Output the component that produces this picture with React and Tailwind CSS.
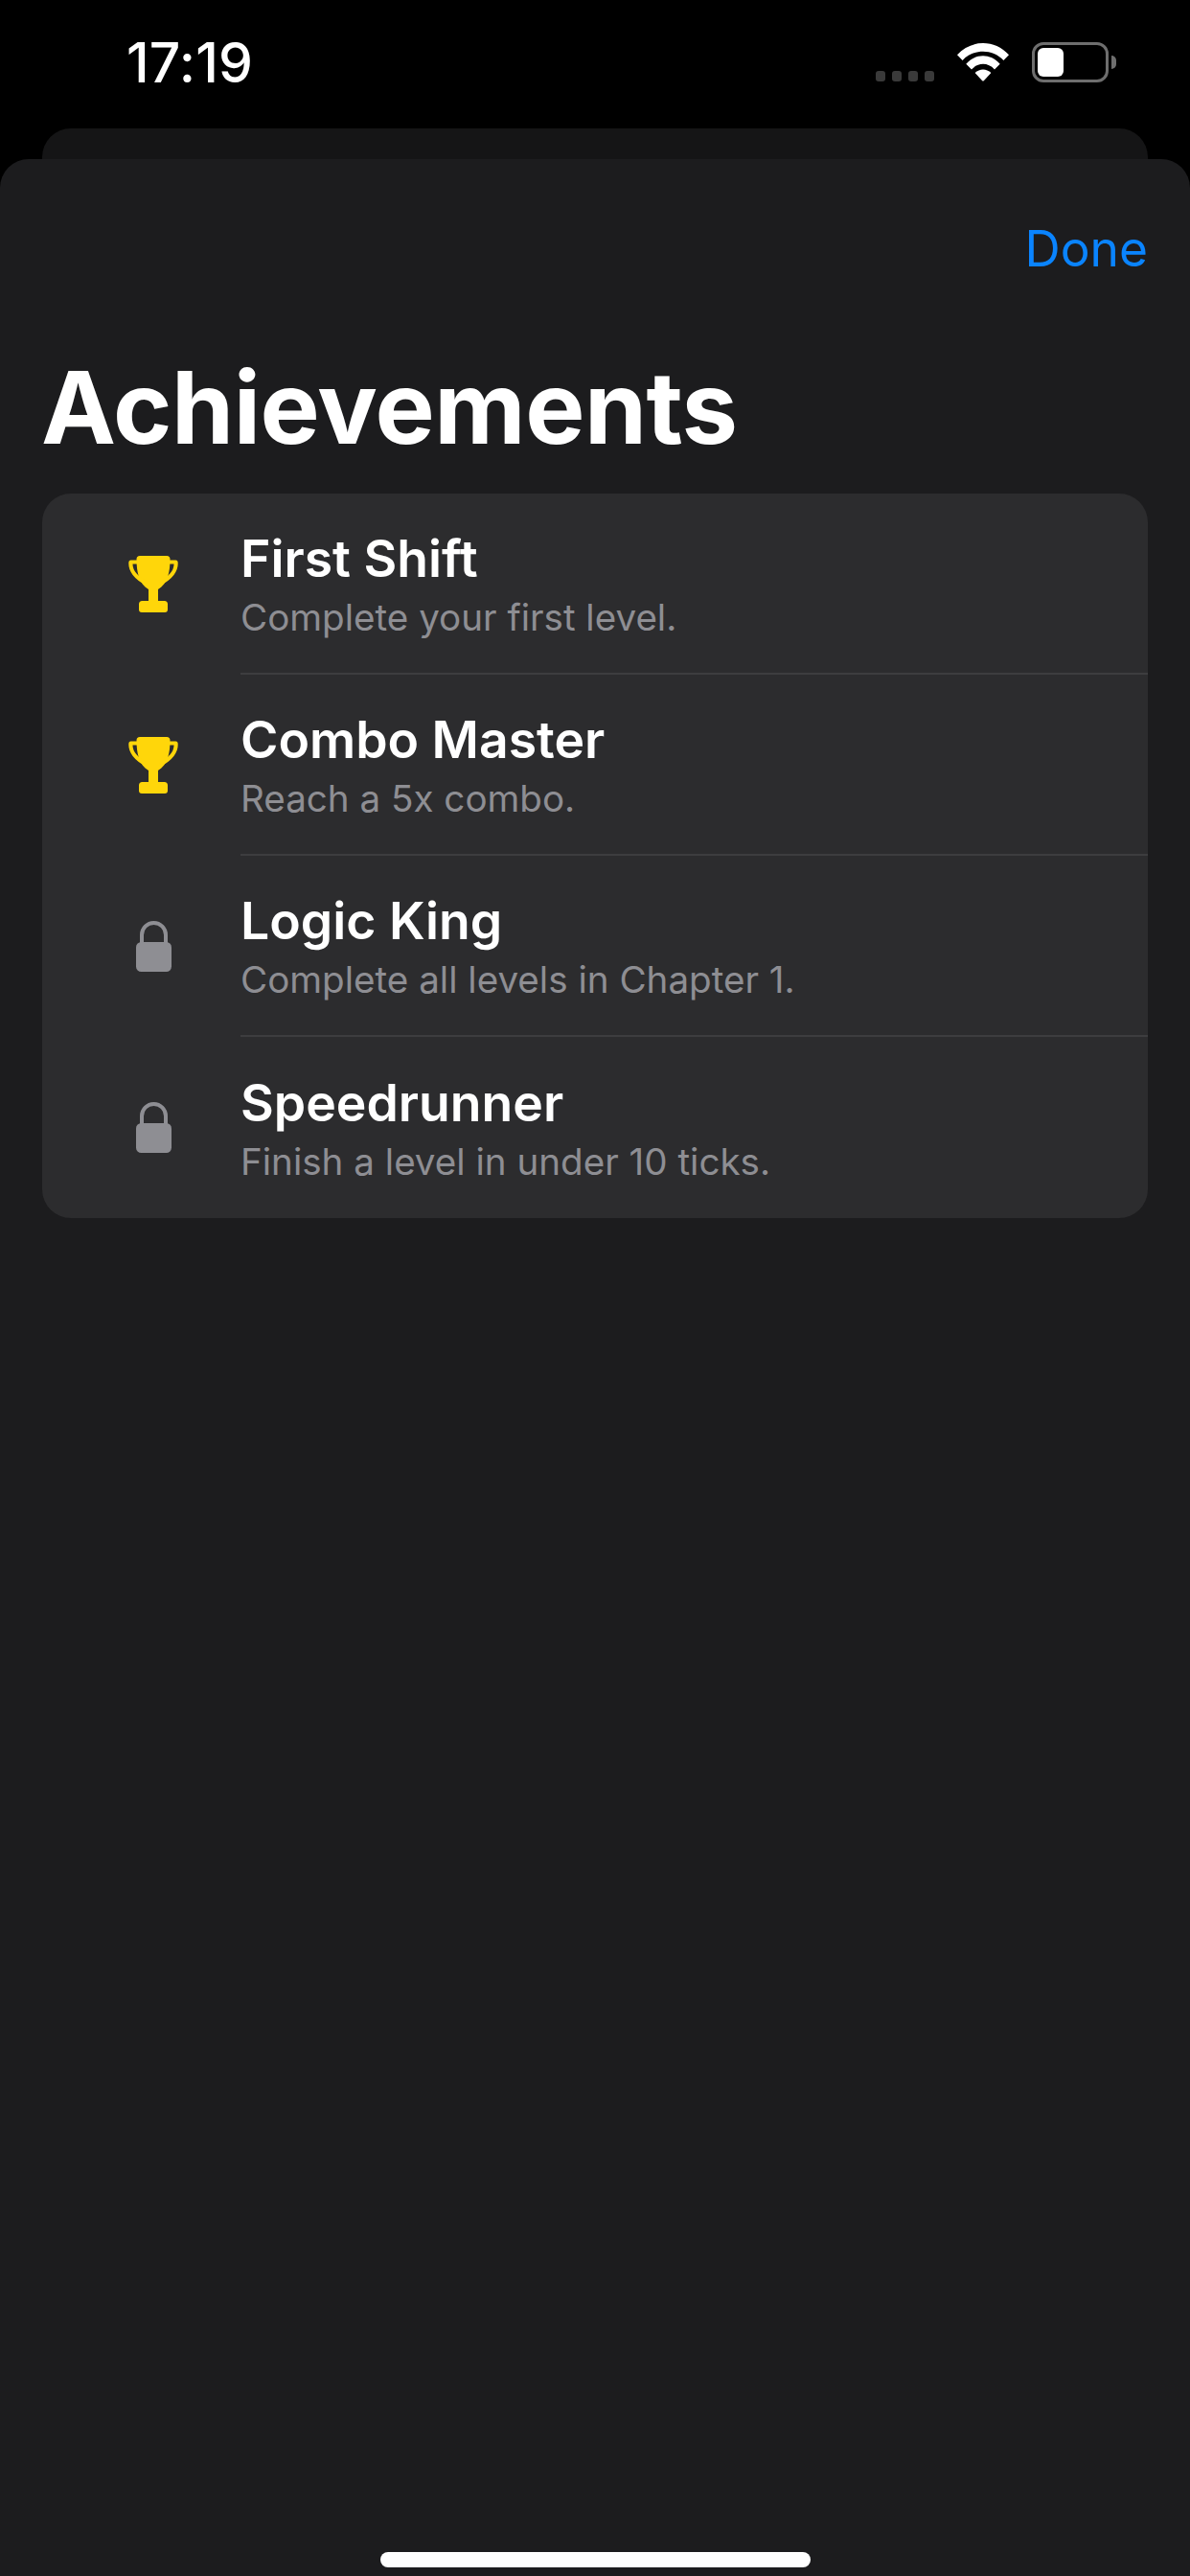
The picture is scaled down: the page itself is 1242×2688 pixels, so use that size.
const rows = [
  { t: "First Shift", s: "Complete your first level.", icon: "trophy" },
  { t: "Combo Master", s: "Reach a 5x combo.", icon: "trophy" },
  { t: "Logic King", s: "Complete all levels in Chapter 1.", icon: "lock" },
  { t: "Speedrunner", s: "Finish a level in under 10 ticks.", icon: "lock" },
];

function Trophy() {
  return (
    <svg width="52" height="59" viewBox="0 0 52 59" fill="none">
      <path d="M12 0H40a3.5 3.5 0 0 1 3.5 3.5C43.5 17 41 29 31 35V47H37.5a3.5 3.5 0 0 1 3.5 3.5V56a3 3 0 0 1-3 3H14a3 3 0 0 1-3-3V50.500a3.500 3.500 0 0 1 3.500-3.500H21V35C11 29 8.500 17 8.500 3.500A3.500 3.500 0 0 1 12 0Z" fill="#ffd60a" />
      <path d="M9 6.500H2.500C1.500 15 8 23 19 28.500M43 6.500H49.500C50.500 15 44 23 33 28.500" stroke="#ffd60a" strokeWidth="4.200" strokeLinejoin="round" />
    </svg>
  );
}

function Lock() {
  return (
    <svg width="37" height="53" viewBox="0 0 37 53" fill="none">
      <path d="M6 24V14.500a12.500 12.500 0 0 1 25 0V24" stroke="#8e8e93" strokeWidth="4" />
      <rect x="0" y="22" width="37" height="31" rx="5.500" fill="#8e8e93" />
    </svg>
  );
}

function Wifi() {
  return (
    <svg width="54" height="40" viewBox="0 0 54 40" fill="#fff">
      <path d="M0 12.300C14.500-4.100 39.500-4.100 54 12.300L48.400 18C36.900 5.700 17.100 5.700 5.600 18Z" />
      <path d="M9.300 21.700C19.500 10.500 34.500 10.500 44.700 21.700L39 27.400C32 20 22 20 15 27.400Z" />
      <path d="M18.600 31C23.500 26.300 30.500 26.300 35.400 31L27.800 39.200a1.100 1.100 0 0 1-1.600 0Z" />
    </svg>
  );
}

function Battery() {
  return (
    <div className="flex items-center">
      <div className="w-[80px] h-[42px] rounded-[12px] border-[3px] border-[#6e6e6e] p-[3px] flex">
        <div className="w-[27px] h-full rounded-[6px] bg-white" />
      </div>
      <div className="w-[5px] h-[14px] ml-[3px] rounded-r-[5px] bg-[#6e6e6e]" />
    </div>
  );
}

export default function App() {
  return (
    <div className="w-[1242px] h-[2688px] bg-black flex flex-col overflow-hidden font-['Inter',sans-serif] text-white">
      <div className="h-[134px] shrink-0 flex items-start pl-[132px] pr-[77px]">
        <div className="mt-[33px] text-[57px] leading-[66px] font-medium tracking-[0.2px]">17:19</div>
        <div className="ml-auto mt-[44px] flex items-start">
          <div className="mt-[30px] flex gap-[7px]">
            {[0, 1, 2, 3].map((i) => (
              <div key={i} className="w-[10px] h-[11px] rounded-[3px] bg-[#3a3a3a]" />
            ))}
          </div>
          <div className="ml-[24px] mt-[1px]"><Wifi /></div>
          <div className="ml-[24px]"><Battery /></div>
        </div>
      </div>
      <div className="mx-[44px] h-[32px] shrink-0 rounded-t-[30px] bg-[#151516]" />
      <div className="flex-1 rounded-t-[30px] bg-[#1c1c1e] flex flex-col px-[44px]">
        <div className="mt-[60px] flex justify-end text-[51.5px] leading-[66px] text-[#0a84ff]">Done</div>
        <h1 className="-ml-[1px] mt-[71px] text-[104.5px] leading-[124px] font-bold tracking-[-0.5px]">Achievements</h1>
        <div className="mt-[28px] rounded-[30px] bg-[#2c2c2e] flex flex-col">
          {rows.map((r, i) => (
            <div key={r.t} className="h-[189px] flex items-center">
              <div className="ml-[90px] w-[52px] flex justify-center shrink-0">
                {r.icon === "trophy" ? <Trophy /> : <Lock />}
              </div>
              <div className={"ml-[65px] flex-1 h-full pt-[3px] flex flex-col justify-center " + (i < 3 ? "border-b-[2px] border-[#3d3d3f]" : "")}>
                <div className="text-[53.5px] leading-[64px] font-semibold">{r.t}</div>
                <div className="mt-[4px] text-[38.6px] leading-[50px] text-[#8e8e93]">{r.s}</div>
              </div>
            </div>
          ))}
        </div>
        <div className="mt-auto mb-[9px] mx-auto w-[449px] h-[16px] rounded-full bg-white" />
      </div>
    </div>
  );
}
